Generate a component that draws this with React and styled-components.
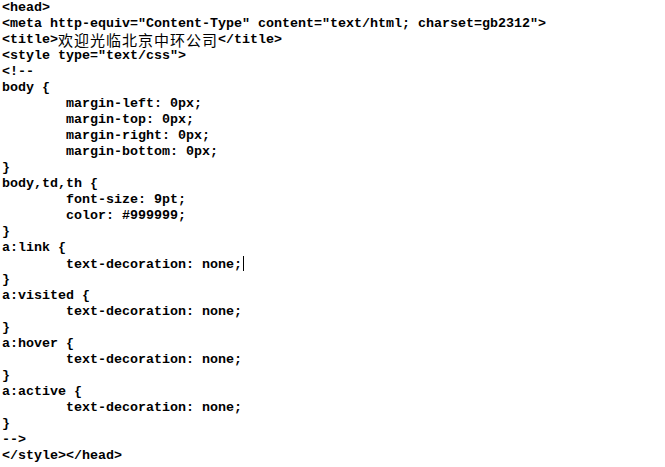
import styled, { createGlobalStyle } from 'styled-components';

const GlobalStyle = createGlobalStyle`
  html, body {
    margin: 0;
    padding: 0;
    background: #ffffff;
  }
`;

const Editor = styled.div`
  width: 665px;
  height: 467px;
  padding: 0 0 0 2px;
  box-sizing: border-box;
  background: #ffffff;
  overflow: hidden;
`;

const Line = styled.div`
  height: 16px;
  line-height: 16px;
  white-space: pre;
  overflow: visible;
  font-family: "Liberation Mono", "DejaVu Sans Mono", monospace;
  font-size: 13.33px;
  font-weight: bold;
  color: #000000;
`;

const Cjk = styled.span`
  display: inline-block;
  height: 16px;
  line-height: 16px;
  vertical-align: top;
  font-family: "Noto Sans CJK SC", sans-serif;
  font-weight: normal;
  font-size: 15px;
  letter-spacing: 1px;
`;

const Caret = styled.span`
  display: inline-block;
  width: 1px;
  height: 15px;
  margin-left: 1px;
  vertical-align: -3px;
  background: #000000;
`;

const lines = [
  '<head>',
  '<meta http-equiv="Content-Type" content="text/html; charset=gb2312">',
  'TITLE',
  '<style type="text/css">',
  '<!--',
  'body {',
  '        margin-left: 0px;',
  '        margin-top: 0px;',
  '        margin-right: 0px;',
  '        margin-bottom: 0px;',
  '}',
  'body,td,th {',
  '        font-size: 9pt;',
  '        color: #999999;',
  '}',
  'a:link {',
  'CARET',
  '}',
  'a:visited {',
  '        text-decoration: none;',
  '}',
  'a:hover {',
  '        text-decoration: none;',
  '}',
  'a:active {',
  '        text-decoration: none;',
  '}',
  '-->',
  '</style></head>',
];

export default function App() {
  return (
    <>
      <GlobalStyle />
      <Editor>
        {lines.map((text, i) => {
          if (text === 'TITLE') {
            return (
              <Line key={i}>
                {'<title>'}
                <Cjk>欢迎光临北京中环公司</Cjk>
                {'</title>'}
              </Line>
            );
          }
          if (text === 'CARET') {
            return (
              <Line key={i}>
                {'        text-decoration: none;'}
                <Caret />
              </Line>
            );
          }
          return <Line key={i}>{text}</Line>;
        })}
      </Editor>
    </>
  );
}
